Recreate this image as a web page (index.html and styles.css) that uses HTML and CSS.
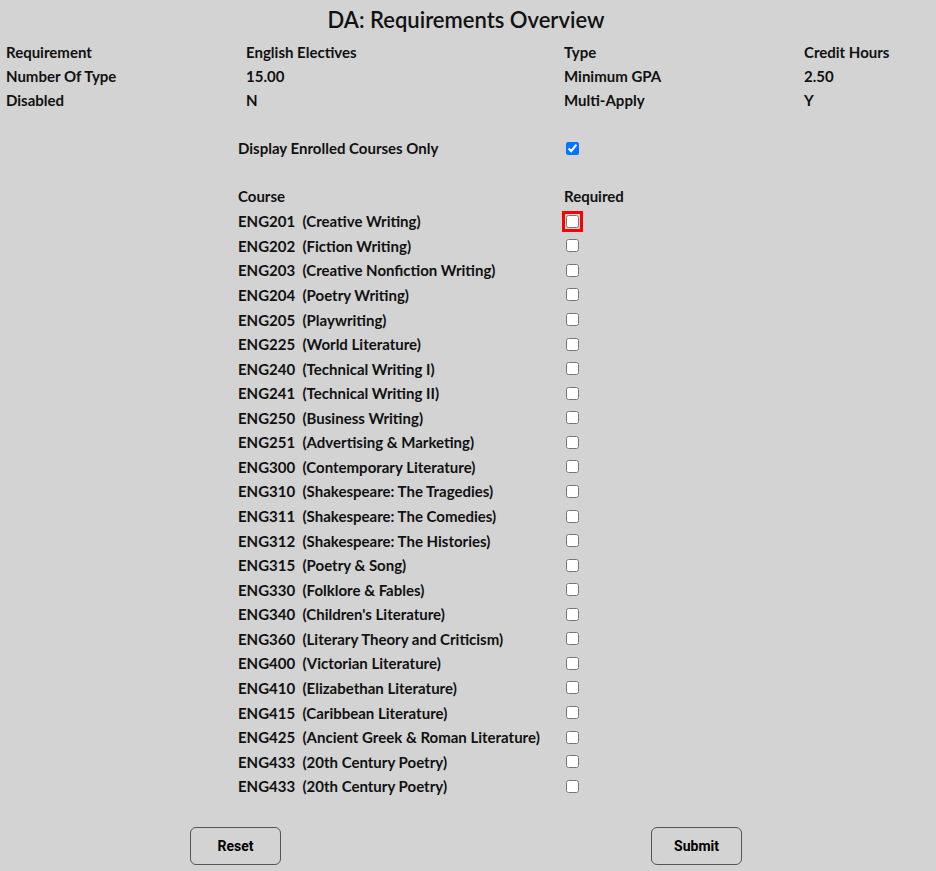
FILE: index.html
```html
<!DOCTYPE html>
<html lang="en">
<head>
<meta charset="utf-8">
<title>DA: Requirements Overview</title>
<link rel="stylesheet" href="styles.css">
</head>
<body>
<div class="page">
  <h1 class="title">DA: Requirements Overview</h1>
  <div class="info">
    <div>Requirement</div><div>English Electives</div><div>Type</div><div>Credit Hours</div>
    <div>Number Of Type</div><div>15.00</div><div>Minimum GPA</div><div>2.50</div>
    <div>Disabled</div><div>N</div><div>Multi-Apply</div><div>Y</div>
  </div>
  <div class="courses">
    <div class="row"><div class="c1">Display Enrolled Courses Only</div><div class="c2"><input type="checkbox" checked></div></div>
    <div class="row spacer"></div>
    <div class="row"><div class="c1">Course</div><div class="c2">Required</div></div>
    <div class="list">
      <div class="row crow"><div class="c1">ENG201&nbsp; (Creative Writing)</div><div class="c2"><input type="checkbox" class="focus"></div></div>
      <div class="row crow"><div class="c1">ENG202&nbsp; (Fiction Writing)</div><div class="c2"><input type="checkbox"></div></div>
      <div class="row crow"><div class="c1">ENG203&nbsp; (Creative Nonfiction Writing)</div><div class="c2"><input type="checkbox"></div></div>
      <div class="row crow"><div class="c1">ENG204&nbsp; (Poetry Writing)</div><div class="c2"><input type="checkbox"></div></div>
      <div class="row crow"><div class="c1">ENG205&nbsp; (Playwriting)</div><div class="c2"><input type="checkbox"></div></div>
      <div class="row crow"><div class="c1">ENG225&nbsp; (World Literature)</div><div class="c2"><input type="checkbox"></div></div>
      <div class="row crow"><div class="c1">ENG240&nbsp; (Technical Writing I)</div><div class="c2"><input type="checkbox"></div></div>
      <div class="row crow"><div class="c1">ENG241&nbsp; (Technical Writing II)</div><div class="c2"><input type="checkbox"></div></div>
      <div class="row crow"><div class="c1">ENG250&nbsp; (Business Writing)</div><div class="c2"><input type="checkbox"></div></div>
      <div class="row crow"><div class="c1">ENG251&nbsp; (Advertising &amp; Marketing)</div><div class="c2"><input type="checkbox"></div></div>
      <div class="row crow"><div class="c1">ENG300&nbsp; (Contemporary Literature)</div><div class="c2"><input type="checkbox"></div></div>
      <div class="row crow"><div class="c1">ENG310&nbsp; (Shakespeare: The Tragedies)</div><div class="c2"><input type="checkbox"></div></div>
      <div class="row crow"><div class="c1">ENG311&nbsp; (Shakespeare: The Comedies)</div><div class="c2"><input type="checkbox"></div></div>
      <div class="row crow"><div class="c1">ENG312&nbsp; (Shakespeare: The Histories)</div><div class="c2"><input type="checkbox"></div></div>
      <div class="row crow"><div class="c1">ENG315&nbsp; (Poetry &amp; Song)</div><div class="c2"><input type="checkbox"></div></div>
      <div class="row crow"><div class="c1">ENG330&nbsp; (Folklore &amp; Fables)</div><div class="c2"><input type="checkbox"></div></div>
      <div class="row crow"><div class="c1">ENG340&nbsp; (Children's Literature)</div><div class="c2"><input type="checkbox"></div></div>
      <div class="row crow"><div class="c1">ENG360&nbsp; (Literary Theory and Criticism)</div><div class="c2"><input type="checkbox"></div></div>
      <div class="row crow"><div class="c1">ENG400&nbsp; (Victorian Literature)</div><div class="c2"><input type="checkbox"></div></div>
      <div class="row crow"><div class="c1">ENG410&nbsp; (Elizabethan Literature)</div><div class="c2"><input type="checkbox"></div></div>
      <div class="row crow"><div class="c1">ENG415&nbsp; (Caribbean Literature)</div><div class="c2"><input type="checkbox"></div></div>
      <div class="row crow"><div class="c1">ENG425&nbsp; (Ancient Greek &amp; Roman Literature)</div><div class="c2"><input type="checkbox"></div></div>
      <div class="row crow"><div class="c1">ENG433&nbsp; (20th Century Poetry)</div><div class="c2"><input type="checkbox"></div></div>
      <div class="row crow"><div class="c1">ENG433&nbsp; (20th Century Poetry)</div><div class="c2"><input type="checkbox"></div></div>
    </div>
  </div>
  <div class="actions">
    <button type="button" class="btn">Reset</button>
    <button type="button" class="btn">Submit</button>
  </div>
</div>
</body>
</html>
```
FILE: styles.css
```css
html, body {
  margin: 0;
  padding: 0;
  background: #d3d3d3;
}
body {
  font-family: "Lato", "Liberation Sans", sans-serif;
  color: #111;
}
.page {
  width: 932px;
}
.title {
  margin: 0;
  height: 40px;
  line-height: 40px;
  text-align: center;
  font-size: 22px;
  font-weight: 600;
}
.info {
  display: grid;
  grid-template-columns: 240px 318px 240px 1fr;
  grid-auto-rows: 24px;
  padding-left: 6px;
  font-size: 15px;
  font-weight: 700;
  line-height: 24px;
}
.courses {
  margin: 24px 0 0 238px;
  width: 456px;
  font-size: 15px;
  font-weight: 700;
}
.row {
  display: flex;
  align-items: center;
  height: 24px;
}
.list {
  padding-top: 1px;
}
.crow {
  height: 24.57px;
}
.c1 {
  width: 326px;
}
.c2 {
  display: flex;
  align-items: center;
}
.c2 input {
  margin: 0 0 0 2px;
  width: 13px;
  height: 13px;
}
.c2 input.focus {
  outline: 3px solid #f00;
  outline-offset: 1px;
}
.actions {
  display: flex;
  justify-content: space-between;
  width: 552px;
  margin: 28px 0 0 190px;
}
.btn {
  width: 91px;
  height: 38px;
  background: transparent;
  border: 1px solid #555;
  border-radius: 6px;
  font-family: "Roboto", "Liberation Sans", sans-serif;
  font-weight: 700;
  font-size: 14px;
  color: #000;
  padding: 0;
}
```
